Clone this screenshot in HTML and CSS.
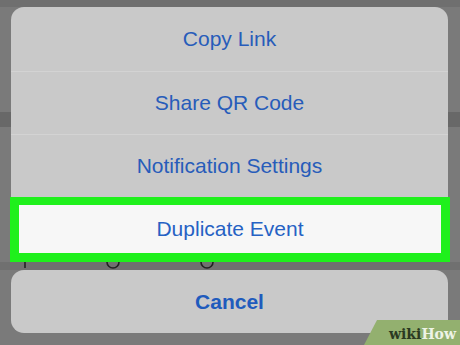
FILE: index.html
```html
<!DOCTYPE html>
<html>
<head>
<meta charset="utf-8">
<link rel="stylesheet" href="styles.css">
</head>
<body>
<div class="page">
  <div class="sheet-wrap">
    <div class="sheet">
      <div class="row first">Copy Link</div>
      <div class="sep"></div>
      <div class="row">Share QR Code</div>
      <div class="sep"></div>
      <div class="row">Notification Settings</div>
      <div class="highlight"><span>Duplicate Event</span></div>
    </div>
  </div>
  <svg class="strip" width="460" height="8" viewBox="0 0 460 8">
    <line x1="25" y1="0" x2="25" y2="6" stroke="#222" stroke-width="1.6"/>
    <path d="M107 0 A6 6 0 0 0 119 0" fill="none" stroke="#222" stroke-width="1.6"/>
    <path d="M201 0 A6 6 0 0 0 213 0" fill="none" stroke="#222" stroke-width="1.6"/>
  </svg>
  <div class="cancel-wrap">
    <div class="cancel">Cancel</div>
  </div>
</div>
<div class="logo"><span class="wiki">wiki</span><span class="how">How</span></div>
</body>
</html>
```
FILE: styles.css
```css
html, body {
  margin: 0;
  padding: 0;
}
body {
  width: 460px;
  height: 345px;
  overflow: hidden;
  position: relative;
  font-family: "Liberation Sans", Arial, sans-serif;
  background: linear-gradient(to bottom,
    #6f6f6f 0, #6f6f6f 7px,
    #7a7a7a 7px, #7a7a7a 112px,
    #686868 112px, #686868 127px,
    #7a7a7a 127px, #7a7a7a 262px,
    #707070 262px, #707070 270px,
    #7a7a7a 270px);
}
.page {
  display: flex;
  flex-direction: column;
  padding-top: 7px;
}
.sheet-wrap {
  padding-left: 11px;
}
.sheet {
  width: 437px;
  background: #c9c9c9;
  border-radius: 13px 13px 0 0;
  display: flex;
  flex-direction: column;
}
.row {
  height: 62px;
  display: flex;
  align-items: center;
  justify-content: center;
  color: #275cba;
  font-size: 21px;
}
.row.first {
  height: 64px;
}
.sep {
  height: 1px;
  background: #d3d3d3;
}
.highlight {
  box-sizing: border-box;
  height: 65px;
  margin-left: -1px;
  margin-right: -2px;
  border: 9px solid #1ff01c;
  border-top-width: 8px;
  background: #f7f7f7;
  display: flex;
  align-items: center;
  justify-content: center;
  color: #2662c4;
  font-size: 21px;
}
.strip {
  display: block;
}
.cancel-wrap {
  padding-left: 11px;
}
.cancel {
  width: 437px;
  height: 63px;
  background: #c9c9c9;
  border-radius: 13px;
  display: flex;
  align-items: center;
  justify-content: center;
  color: #1f5bbd;
  font-size: 21px;
  font-weight: bold;
}
.logo {
  position: absolute;
  right: 0;
  bottom: 0;
  width: 96px;
  height: 25px;
  background: #93b06f;
  clip-path: polygon(13px 0, 100% 0, 100% 100%, 0 100%);
  display: flex;
  align-items: center;
  justify-content: flex-end;
  padding-right: 4px;
  box-sizing: border-box;
  font-family: "DejaVu Serif", serif;
  font-weight: bold;
  font-size: 14px;
  padding-top: 2px;
}
.wiki {
  color: #2b3a22;
}
.how {
  color: #eef3e6;
}
```
